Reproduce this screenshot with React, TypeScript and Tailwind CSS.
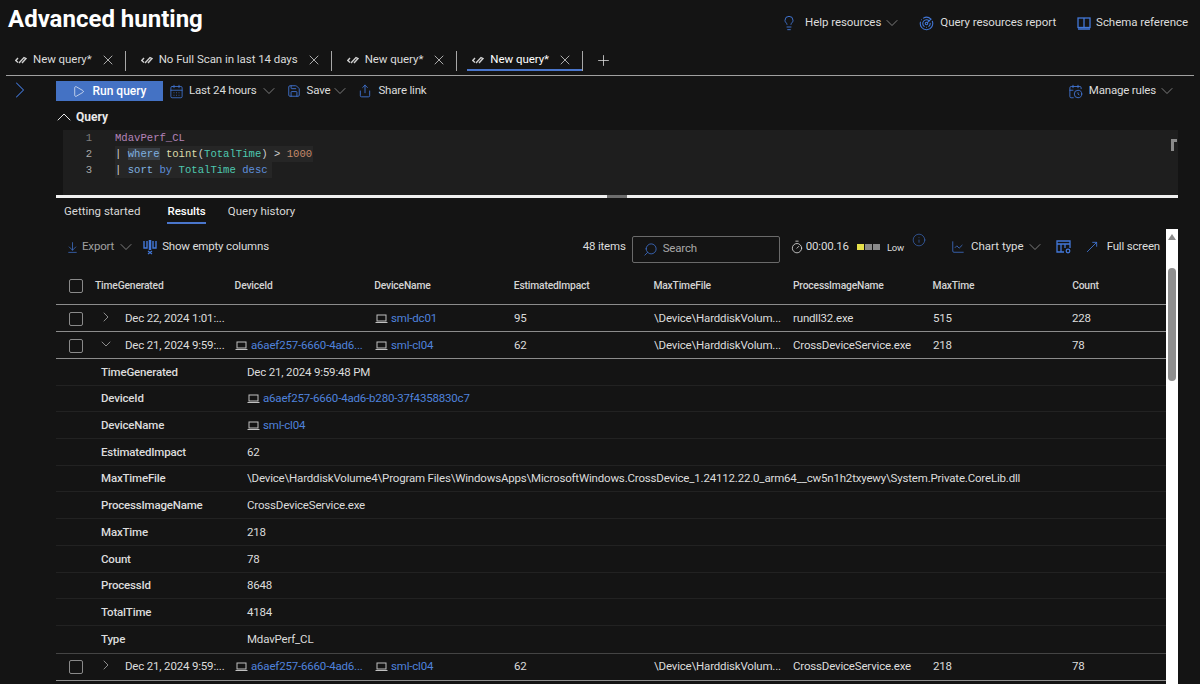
import React from 'react'
import {
  ArrowDownToLine, CalendarDays, CalendarClock, ChevronDown, ChevronRight, ChevronUp, Info, Lightbulb, LineChart, MoveUpRight, Play, Plus, Radar, Save, Search, Share, Timer, X,
} from 'lucide-react'

const iconBlue = 'text-[#4277d8]'

function QueryIcon() {
  return (
    <svg width="12" height="10" viewBox="0 0 12 10" fill="none" stroke="#d0d0d0" strokeWidth="1.4" className="shrink-0">
      <path d="M3 3 L0.800 5.500 L3 7.500" />
      <path d="M4 8 L9 2.500 L11 3.500 L7 8" />
    </svg>
  )
}

function LaptopIcon() {
  return (
    <svg width="13" height="10" viewBox="0 0 13 10" fill="none" stroke="#c0c0c0" strokeWidth="1" className="shrink-0">
      <rect x="2" y="1" width="9" height="6" />
      <path d="M0.500 8.500h12" />
    </svg>
  )
}

function SchemaIcon() {
  return (
    <svg width="14" height="13" viewBox="0 0 14 13" fill="none" stroke="#4277d8" strokeWidth="1.3" className="shrink-0">
      <rect x="1" y="1" width="12" height="9.500" />
      <path d="M7 1v9.500M1 12h12" />
    </svg>
  )
}

function EmptyColumnsIcon() {
  return (
    <svg width="14" height="15" viewBox="0 0 14 15" fill="none" stroke="#4277d8" strokeWidth="1.400" className="shrink-0">
      <path d="M1 1v7h3V1M13 1v7h-3V1" />
      <path d="M7 0v10" strokeWidth="2.500" />
      <path d="M5 11l4 3M9 11l-4 3" strokeWidth="1.200" />
    </svg>
  )
}

function TableSettingsIcon() {
  return (
    <svg width="15" height="14" viewBox="0 0 15 14" fill="none" stroke="#4277d8" strokeWidth="1.300" className="shrink-0">
      <path d="M8 12H1V1h13v7" />
      <path d="M1 4h13M5 4v8M9 4v4" />
      <circle cx="12" cy="11" r="1.800" />
    </svg>
  )
}

function Tab({ label, active }: { label: string; active?: boolean }) {
  return (
    <div className={`flex h-[21px] items-center border-b-2 pl-[5px] ${active ? 'border-[#4a76cc] text-white' : 'border-transparent text-[#dcdcdc]'}`}>
      <QueryIcon />
      <span className="ml-[6px] whitespace-nowrap text-[11.500px] leading-none tracking-[-0.05px]">{label}</span>
      <X size={16} strokeWidth={1.100} className="ml-[8px] text-[#e4e4e4]" />
      <span className={active ? 'w-[9px]' : 'w-0'} />
    </div>
  )
}

function Divider() {
  return <div className="ml-[9px] mr-[10px] h-[20px] w-px shrink-0 bg-[#a8a8a8]" />
}

function ToolItem({ icon, label, chevron, dim, gap = 'gap-[6px]', chevronClass = '-ml-[5px]' }: { icon: React.ReactNode; label: string; chevron?: boolean; dim?: boolean; gap?: string; chevronClass?: string }) {
  return (
    <div className={`flex items-center text-[11.500px] ${gap} ${dim ? 'text-[#a0a0a0]' : 'text-[#dcdcdc]'}`}>
      {icon}
      <span className="whitespace-nowrap">{label}</span>
      {chevron && <ChevronDown size={20} strokeWidth={0.8} className={`-my-[3px] text-[#b0b0b0] ${chevronClass}`} />}
    </div>
  )
}

function Checkbox() {
  return <div className="h-[14px] w-[14px] shrink-0 rounded-[2px] border border-[#8a8a8a]" />
}

function DeviceLink({ text }: { text: string }) {
  return (
    <span className="flex items-center gap-[3px] whitespace-nowrap">
      <LaptopIcon />
      <span className="text-[#4f82dc]">{text}</span>
    </span>
  )
}

const columns = ['TimeGenerated', 'DeviceId', 'DeviceName', 'EstimatedImpact', 'MaxTimeFile', 'ProcessImageName', 'MaxTime', 'Count']

function Row({ open, time, device, name, values }: { open?: boolean; time: string; device?: string; name: string; values: string[] }) {
  return (
    <div className="flex h-[27px] shrink-0 items-center border-b border-[#8c8c8c] pt-[1px] text-[11.500px] text-[#dcdcdc]">
      <div className="flex w-[39px] shrink-0 justify-center pl-[1px]"><Checkbox /></div>
      <div className="w-[30px] shrink-0 pl-[3px]">
        {open
          ? <ChevronDown size={16} strokeWidth={1} className="-mt-[3px] text-[#c8c8c8]" />
          : <ChevronRight size={16} strokeWidth={1} className="-mt-[4px] text-[#c8c8c8]" />}
      </div>
      <div className="w-[110px] shrink-0 whitespace-nowrap">{time}</div>
      <div className="w-[140px] shrink-0">{device && <DeviceLink text={device} />}</div>
      <div className="w-[139px] shrink-0"><DeviceLink text={name} /></div>
      <div className="w-[140px] shrink-0">{values[0]}</div>
      <div className="w-[139px] shrink-0 whitespace-nowrap">{values[1]}</div>
      <div className="w-[140px] shrink-0 whitespace-nowrap">{values[2]}</div>
      <div className="w-[139px] shrink-0">{values[3]}</div>
      <div>{values[4]}</div>
    </div>
  )
}

const details: [string, React.ReactNode][] = [
  ['TimeGenerated', 'Dec 21, 2024 9:59:48 PM'],
  ['DeviceId', <DeviceLink text="a6aef257-6660-4ad6-b280-37f4358830c7" />],
  ['DeviceName', <DeviceLink text="sml-cl04" />],
  ['EstimatedImpact', '62'],
  ['MaxTimeFile', '\\Device\\HarddiskVolume4\\Program Files\\WindowsApps\\MicrosoftWindows.CrossDevice_1.24112.22.0_arm64__cw5n1h2txyewy\\System.Private.CoreLib.dll'],
  ['ProcessImageName', 'CrossDeviceService.exe'],
  ['MaxTime', '218'],
  ['Count', '78'],
  ['ProcessId', '8648'],
  ['TotalTime', '4184'],
  ['Type', 'MdavPerf_CL'],
]

export default function App() {
  return (
    <div className="flex h-[684px] w-[1200px] flex-col overflow-hidden bg-[#141414] font-['Roboto',sans-serif] tracking-[-0.18px] text-white">
      <div className="flex h-[45px] shrink-0 items-center justify-between pl-[8px] pr-[12px]">
        <h1 className="mb-[8px] text-[24px] font-bold leading-none tracking-normal">Advanced hunting</h1>
        <div className="flex items-center gap-[21px] pt-[1px] tracking-[-0.05px]">
          <div className="-mr-[4px]">
            <ToolItem gap="gap-[8px]" icon={<Lightbulb size={16} strokeWidth={1.400} className={iconBlue} />} label="Help resources" chevron chevronClass="-ml-[7px]" />
          </div>
          <ToolItem icon={<Radar size={15} strokeWidth={1.700} className={iconBlue} />} label="Query resources report" />
          <ToolItem gap="gap-[5px]" icon={<SchemaIcon />} label="Schema reference" />
        </div>
      </div>

      <div className="mx-[6px] flex h-[31px] shrink-0 items-center border-b border-[#a0a0a0] pl-[4px] pt-[1px]">
        <Tab label="New query*" />
        <Divider />
        <Tab label="No Full Scan in last 14 days" />
        <Divider />
        <Tab label="New query*" />
        <Divider />
        <Tab label="New query*" active />
        <div className="h-[20px] w-px bg-[#a8a8a8]" />
        <Plus size={17} strokeWidth={1.100} className="ml-[12px] text-[#e0e0e0]" />
      </div>

      <div className="flex min-h-0 flex-1">
        <div className="w-[56px] shrink-0 pl-[6px]">
          <ChevronRight size={28} strokeWidth={0.900} className="text-[#4277d8]" />
        </div>
        <div className="flex min-w-0 flex-1 flex-col">
          <div className="flex h-[27px] shrink-0 items-center justify-between pr-[23px] pt-[3px]">
            <div className="flex items-center gap-[8px]">
              <div className="-mr-[2px] flex h-[20px] w-[107px] items-center justify-center gap-[7px] bg-[#4472c4] text-[12px] font-medium tracking-normal text-white">
                <Play size={13} strokeWidth={1.200} />
                <span>Run query</span>
              </div>
              <ToolItem gap="gap-[5px]" chevronClass="-ml-[3px]" icon={<CalendarDays size={15} strokeWidth={1.300} className={iconBlue} />} label="Last 24 hours" chevron />
              <ToolItem chevronClass="-ml-[6px]" icon={<Save size={14} strokeWidth={1.500} className={iconBlue} />} label="Save" chevron />
              <ToolItem icon={<Share size={14} strokeWidth={1.500} className={iconBlue} />} label="Share link" />
            </div>
            <ToolItem icon={<CalendarClock size={15} strokeWidth={1.400} className={iconBlue} />} label="Manage rules" chevron />
          </div>

          <div className="flex h-[27px] shrink-0 items-center text-[12px] font-bold tracking-normal text-[#e8e8e8]">
            <ChevronUp size={24} strokeWidth={1} className="-ml-[4px]" />
            <span>Query</span>
          </div>

          <div className="relative ml-[7px] mr-[22px] h-[65px] shrink-0 bg-[#1e1e1e] font-['Liberation_Mono',monospace] text-[10.600px] leading-[16px] tracking-normal">
            <div className="flex"><span className="w-[29px] text-right text-[#7d7d7d]">1</span><span className="ml-[23px] text-[#b483b8]">MdavPerf_CL</span></div>
            <div className="flex"><span className="w-[29px] text-right text-[#a8a8a8]">2</span><span className="ml-[23px] bg-[#262626] pr-[1px] text-[#cfcfcf]">| <span className="bg-[#3a4047] text-[#7fb0e0]">where</span> <span className="text-[#dcdcaa]">toint</span>(<span className="text-[#4ec9b0]">TotalTime</span>) &gt; <span className="text-[#c48a6a]">1000</span></span></div>
            <div className="flex"><span className="w-[29px] text-right text-[#a8a8a8]">3</span><span className="ml-[23px] bg-[#262626] pr-[4px] text-[#cfcfcf]">| <span className="text-[#7fb0e0]">sort</span> <span className="text-[#5f8fdc]">by</span> <span className="text-[#4ec9b0]">TotalTime</span> <span className="text-[#5f8fdc]">desc</span></span></div>
            <div className="absolute right-[1px] top-[9px] h-[12px] w-[6px] border-l-[3px] border-t-[3px] border-[#8a8a8a]" />
          </div>

          <div className="relative mr-[22px] h-[3px] shrink-0 bg-[#f0f0f0]">
            <div className="absolute left-[551px] top-0 h-[3px] w-[20px] bg-[#6e6e6e]" />
          </div>

          <div className="flex h-[26px] shrink-0 items-end pl-[8px] text-[11.500px] tracking-normal text-[#d8d8d8]">
            <span className="pb-[4px]">Getting started</span>
            <span className="ml-[27px] border-b-2 border-[#4a76cc] pb-[2px] font-medium text-white">Results</span>
            <span className="ml-[22px] pb-[4px]">Query history</span>
          </div>

          <div className="flex min-h-0 flex-1">
            <div className="flex min-w-0 flex-1 flex-col">
              <div className="flex h-[44px] shrink-0 items-center justify-between pl-[10px] pr-[6px] pt-[2px]">
                <div className="flex items-center gap-[7px]">
                  <ToolItem dim gap="gap-[3px]" chevronClass="-ml-[1px]" icon={<ArrowDownToLine size={13} strokeWidth={1.300} className={iconBlue} />} label="Export" chevron />
                  <ToolItem gap="gap-[5px]" icon={<EmptyColumnsIcon />} label="Show empty columns" />
                </div>
                <div className="flex items-center text-[11.500px] text-[#dcdcdc]">
                  <span>48 items</span>
                  <div className="ml-[6px] mt-[4px] flex h-[27px] w-[148px] items-center gap-[5px] rounded-[2px] border border-[#6a6a6a] pl-[10px] text-[#a8a8a8]">
                    <Search size={15} strokeWidth={1.200} className={`-scale-x-100 ${iconBlue}`} />
                    <span>Search</span>
                  </div>
                  <Timer size={14} strokeWidth={1.400} className="ml-[10px]" />
                  <span className="ml-[2px]">00:00.16</span>
                  <span className="ml-[8px] h-[6px] w-[7px] bg-[#e6e04a]" />
                  <span className="ml-[1px] h-[6px] w-[7px] bg-[#8a8a8a]" />
                  <span className="ml-[1px] h-[6px] w-[7px] bg-[#8a8a8a]" />
                  <span className="ml-[7px] mt-[2px] text-[9.500px]">Low</span>
                  <Info size={14} strokeWidth={1} className={`-mt-[14px] ml-[8px] ${iconBlue}`} />
                  <LineChart size={14} strokeWidth={1.300} className={`ml-[25px] ${iconBlue}`} />
                  <span className="ml-[6px] tracking-normal">Chart type</span>
                  <ChevronDown size={20} strokeWidth={0.8} className="ml-[1px] -my-[3px] text-[#b0b0b0]" />
                  <span className="ml-[11px]"><TableSettingsIcon /></span>
                  <MoveUpRight size={16} strokeWidth={1.300} className={`ml-[13px] ${iconBlue}`} />
                  <span className="ml-[7px]">Full screen</span>
                </div>
              </div>

              <div className="flex h-[37px] shrink-0 items-center border-b border-[#8c8c8c] text-[10.300px] font-medium text-[#d4d4d4]">
                <div className="flex w-[39px] shrink-0 justify-center pl-[1px]"><Checkbox /></div>
                {columns.map((col, i) => (
                  <div key={col} className={i === 7 ? 'shrink-0' : 'w-[139.600px] shrink-0'}>{col}</div>
                ))}
              </div>

              <Row time="Dec 22, 2024 1:01:..." name="sml-dc01" values={['95', '\\Device\\HarddiskVolum...', 'rundll32.exe', '515', '228']} />
              <Row open time="Dec 21, 2024 9:59:..." device="a6aef257-6660-4ad6..." name="sml-cl04" values={['62', '\\Device\\HarddiskVolum...', 'CrossDeviceService.exe', '218', '78']} />

              <div className="shrink-0">
                {details.map(([key, value]) => (
                  <div key={key} className="flex h-[26.700px] items-center border-b border-[#222222] pt-[1px] text-[11.500px] text-[#dcdcdc] last:border-b-0">
                    <div className="w-[191px] shrink-0 pl-[45px] font-medium text-[#dcdcdc]">{key}</div>
                    <div className="whitespace-nowrap">{value}</div>
                  </div>
                ))}
              </div>

              <div className="border-t border-[#444444]">
                <Row time="Dec 21, 2024 9:59:..." device="a6aef257-6660-4ad6..." name="sml-cl04" values={['62', '\\Device\\HarddiskVolum...', 'CrossDeviceService.exe', '218', '78']} />
              </div>
            </div>

            <div className="mr-[22px] mt-[5px] w-[12px] shrink-0 bg-white pt-[5px]">
              <div className="mx-auto h-0 w-0 border-x-[4px] border-b-[6px] border-x-transparent border-b-[#8a8a8a]" />
              <div className="mx-auto mt-[28px] h-[113px] w-[8px] rounded-[4px] bg-[#8f8f8f]" />
            </div>
          </div>
        </div>
      </div>
    </div>
  )
}
